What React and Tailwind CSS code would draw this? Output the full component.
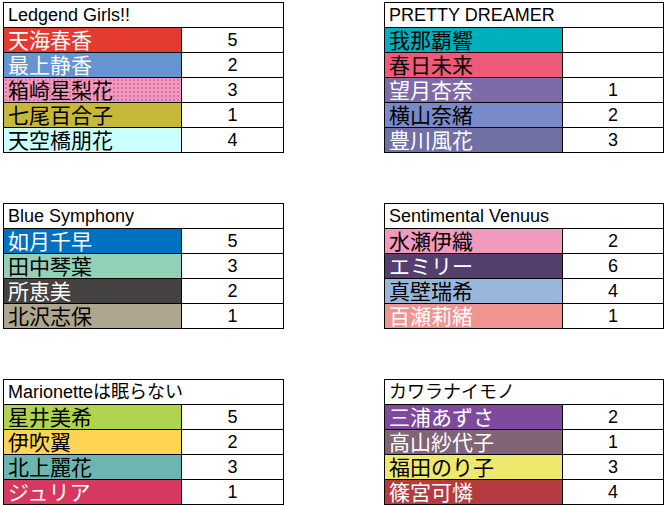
import React from 'react';

const W = 'text-white';
const K = 'text-black';

const left = [
  {
    title: 'Ledgend Girls!!',
    members: [
      ['天海春香', '5', 'bg-[#e53a32]', W],
      ['最上静香', '2', 'bg-[#6495d0]', W],
      ['箱崎星梨花', '3', 'bg-[#f09ac0] bg-[radial-gradient(#d9709c_0.7px,transparent_0.8px)] bg-size-[4px_4px]', K],
      ['七尾百合子', '1', 'bg-[#c8b83a]', K],
      ['天空橋朋花', '4', 'bg-[#ccffff]', K],
    ],
  },
  {
    title: 'Blue Symphony',
    members: [
      ['如月千早', '5', 'bg-[#0070c0]', W],
      ['田中琴葉', '3', 'bg-[#92d0b8]', K],
      ['所恵美', '2', 'bg-[#454341]', W],
      ['北沢志保', '1', 'bg-[#afa690]', K],
    ],
  },
  {
    title: 'Marionetteは眠らない',
    members: [
      ['星井美希', '5', 'bg-[#b0d450]', K],
      ['伊吹翼', '2', 'bg-[#fed552]', K],
      ['北上麗花', '3', 'bg-[#6bb6b0]', K],
      ['ジュリア', '1', 'bg-[#d7385f]', W],
    ],
  },
];

const right = [
  {
    title: 'PRETTY DREAMER',
    members: [
      ['我那覇響', '', 'bg-[#00b0bc]', K],
      ['春日未来', '', 'bg-[#ee5a78]', K],
      ['望月杏奈', '1', 'bg-[#7e6aa8]', W],
      ['横山奈緒', '2', 'bg-[#788ac8]', K],
      ['豊川風花', '3', 'bg-[#7070a4]', W],
    ],
  },
  {
    title: 'Sentimental Venuus',
    members: [
      ['水瀬伊織', '2', 'bg-[#f19ac0]', K],
      ['エミリー', '6', 'bg-[#553f6e]', W],
      ['真壁瑞希', '4', 'bg-[#99b7dc]', K],
      ['百瀬莉緒', '1', 'bg-[#f0948f]', W],
    ],
  },
  {
    title: 'カワラナイモノ',
    members: [
      ['三浦あずさ', '2', 'bg-[#7f4a9e]', W],
      ['高山紗代子', '1', 'bg-[#7f6575]', W],
      ['福田のり子', '3', 'bg-[#eee86e]', K],
      ['篠宮可憐', '4', 'bg-[#b63b40]', W],
    ],
  },
];

function UnitTable({ title, members, numW }) {
  return (
    <div className="flex flex-col border-l border-t border-black">
      <div className="h-[25px] flex items-center pl-1 border-r border-b border-black bg-white text-[18px] leading-none text-black whitespace-nowrap">
        {title}
      </div>
      {members.map(([name, num, bg, fg]) => (
        <div key={name} className="flex h-[25px]">
          <div className={`w-[178px] flex items-center pl-1 border-r border-b border-black text-[21px] leading-none whitespace-nowrap ${bg} ${fg}`}>
            {name}
          </div>
          <div className={`${numW} flex items-center justify-center border-r border-b border-black bg-white text-[18px] leading-none text-black`}>
            {num}
          </div>
        </div>
      ))}
    </div>
  );
}

export default function App() {
  return (
    <div className="w-[665px] h-[505px] bg-white flex gap-[100px] pl-[3px] pt-[2px] font-['Liberation_Sans','Noto_Sans_CJK_JP',sans-serif] overflow-hidden">
      <div className="w-[281px] flex flex-col gap-[50px]">
        {left.map((g) => <UnitTable key={g.title} {...g} numW="w-[102px]" />)}
      </div>
      <div className="w-[280px] flex flex-col gap-[50px]">
        {right.map((g) => <UnitTable key={g.title} {...g} numW="w-[101px]" />)}
      </div>
    </div>
  );
}
